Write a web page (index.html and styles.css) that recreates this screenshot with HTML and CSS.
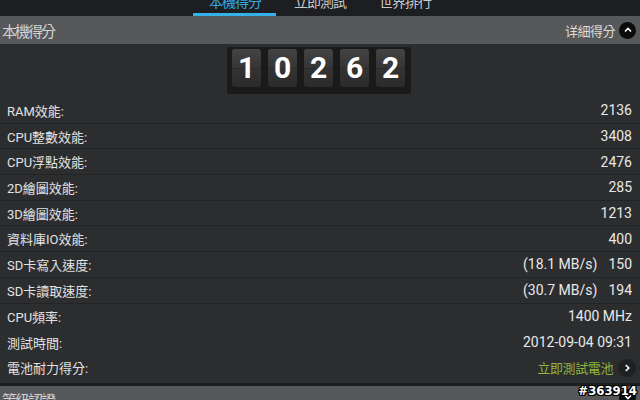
FILE: index.html
```html
<!DOCTYPE html>
<html lang="zh-Hant">
<head>
    <meta charset="UTF-8">
    <meta name="viewport" content="width=device-width, initial-scale=1.0">
    <title>本機得分</title>
    <link rel="stylesheet" href="styles.css">
</head>
<body>

<nav class="tabs">
    <div class="tab active">本機得分</div>
    <div class="tab">立即測試</div>
    <div class="tab">世界排行</div>
</nav>

<div class="section-head">
    <span class="section-title">本機得分</span>
    <span class="detail-link">详細得分
        <span class="round-btn dark">
            <svg width="10" height="10" viewBox="0 0 10 10"><path d="M2 6.5 L5 3.5 L8 6.5" fill="none" stroke="#fff" stroke-width="1.6"/></svg>
        </span>
    </span>
</div>

<div class="score">
    <div class="counter">
        <div class="digit">1</div>
        <div class="digit">0</div>
        <div class="digit">2</div>
        <div class="digit">6</div>
        <div class="digit">2</div>
    </div>
</div>

<ul class="results">
    <li class="line"><span>RAM效能:</span><span class="value">2136</span></li>
    <li class="line"><span>CPU整數效能:</span><span class="value">3408</span></li>
    <li class="line"><span>CPU浮點效能:</span><span class="value">2476</span></li>
    <li class="line"><span>2D繪圖效能:</span><span class="value">285</span></li>
    <li class="line"><span>3D繪圖效能:</span><span class="value">1213</span></li>
    <li class="line"><span>資料庫IO效能:</span><span class="value">400</span></li>
    <li class="line"><span>SD卡寫入速度:</span><span class="value"><span class="speed">(18.1 MB/s)</span>150</span></li>
    <li class="line"><span>SD卡讀取速度:</span><span class="value"><span class="speed">(30.7 MB/s)</span>194</span></li>
    <li><span>CPU頻率:</span><span class="value">1400 MHz</span></li>
    <li><span>測試時間:</span><span class="value">2012-09-04 09:31</span></li>
    <li>
        <span>電池耐力得分:</span>
        <span class="battery">立即測試電池
            <span class="round-btn">
                <svg width="10" height="10" viewBox="0 0 10 10"><path d="M3.8 2 L6.8 5 L3.8 8" fill="none" stroke="#fff" stroke-width="1.6"/></svg>
            </span>
        </span>
    </li>
</ul>

<div class="section-head lower">
    <span class="section-title">等級認證</span>
    <span class="round-btn dark">
        <svg width="10" height="10" viewBox="0 0 10 10"><path d="M2 3.5 L5 6.5 L8 3.5" fill="none" stroke="#fff" stroke-width="1.6"/></svg>
    </span>
</div>

<div class="watermark">#363914</div>

</body>
</html>
```

FILE: styles.css
```css
body {
    margin: 0;
    width: 640px;
    height: 400px;
    overflow: hidden;
    position: relative;
    background: #2c2d2f;
    color: #e2e2e2;
    font-family: Roboto, "Noto Sans CJK TC", sans-serif;
}
.tabs {
    height: 16px;
    background: #1d1e21;
    display: flex;
    justify-content: center;
    align-items: flex-end;
    overflow: hidden;
}
.tab {
    width: 85px;
    text-align: center;
    font-size: 14px;
    line-height: 15px;
    padding-bottom: 6px;
    color: #c8c8c8;
    letter-spacing: -1px;
    position: relative;
}
.tab.active {
    color: #35a8e0;
}
.tab.active::after {
    content: "";
    position: absolute;
    left: 0;
    right: 2px;
    bottom: 0;
    height: 3px;
    background: #35b0e8;
}
.section-head {
    height: 28px;
    background: #575859;
    display: flex;
    align-items: center;
    justify-content: space-between;
    padding: 0 4px 0 2px;
}
.section-title {
    font-size: 15px;
    letter-spacing: -2px;
    color: #d2d2d2;
}
.detail-link {
    display: flex;
    align-items: center;
    gap: 4px;
    font-size: 13px;
    letter-spacing: -0.5px;
    color: #dcdcdc;
}
.round-btn {
    width: 18px;
    height: 18px;
    border-radius: 50%;
    background: #1f2022;
    display: flex;
    align-items: center;
    justify-content: center;
}
.round-btn.dark {
    width: 17px;
    height: 17px;
    background: #0c0c0c;
}
.score {
    height: 54px;
    padding-top: 3px;
    display: flex;
    justify-content: center;
    box-sizing: border-box;
}
.counter {
    display: flex;
    gap: 7px;
    height: 38px;
    padding: 2px 6px 7px 5px;
    background: #1a1a1b;
    border-radius: 3px;
    margin-left: -2px;
}
.digit {
    width: 29px;
    height: 38px;
    border-radius: 3px;
    background: linear-gradient(#444 0%, #353535 50%, #262626 52%, #333 53%, #2a2a2a 100%);
    color: #fff;
    font-weight: bold;
    font-size: 30px;
    line-height: 38px;
    text-align: center;
}
.results {
    list-style: none;
    margin: 0;
    padding: 0;
}
.results li {
    height: 25.7px;
    box-sizing: border-box;
    display: flex;
    align-items: center;
    justify-content: space-between;
    padding: 0 8px 0 7px;
    font-size: 13px;
}
.results li.line {
    border-bottom: 1px solid #232426;
}
.value {
    font-size: 14px;
    color: #e8e8e8;
}
.speed {
    margin-right: 11px;
}
.battery {
    display: flex;
    align-items: center;
    gap: 5px;
    margin-right: -4px;
    font-size: 13px;
    letter-spacing: -0.4px;
    color: #8fb83c;
}
.section-head.lower {
    margin-top: 2px;
    border-top: 3px solid #1d1e20;
    align-items: flex-start;
    padding-top: 3px;
}
.watermark {
    position: absolute;
    right: 3px;
    bottom: 2px;
    font-family: "DejaVu Sans Condensed", "DejaVu Sans", sans-serif;
    font-weight: bold;
    font-size: 13px;
    color: #fff;
    text-shadow: 1px 0 #000, -1px 0 #000, 0 1px #000, 0 -1px #000, 1px 1px #000, -1px -1px #000, 1px -1px #000, -1px 1px #000;
}
```
